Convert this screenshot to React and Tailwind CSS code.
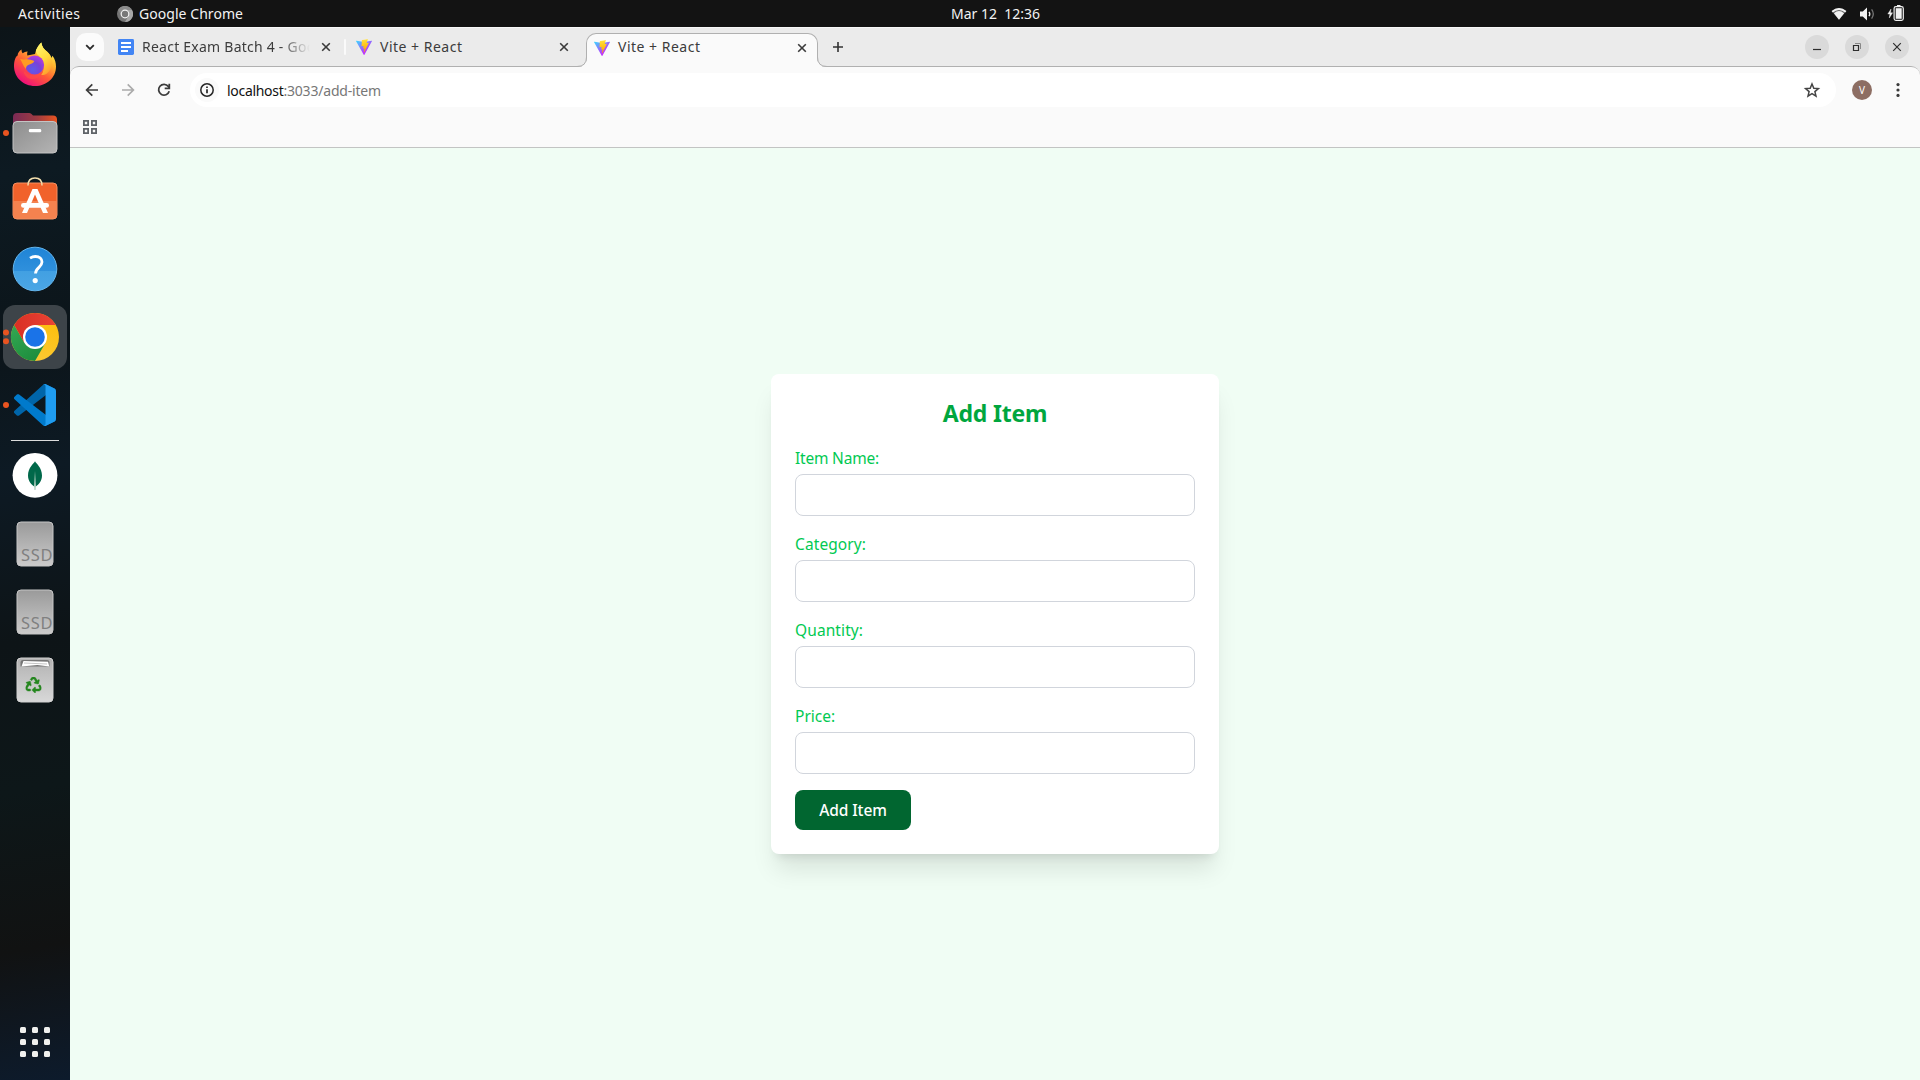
/* ---------- Small icons ---------- */

import { FaRecycle } from "react-icons/fa";

function ViteLogo({ id }) {
  return (
    <svg viewBox="0 0 256 257" className="size-4 shrink-0">
      <defs>
        <linearGradient id={id + "a"} x1="-.828%" x2="57.636%" y1="7.652%" y2="78.411%">
          <stop offset="0%" stopColor="#41D1FF" />
          <stop offset="100%" stopColor="#BD34FE" />
        </linearGradient>
        <linearGradient id={id + "b"} x1="43.376%" x2="50.316%" y1="2.242%" y2="89.03%">
          <stop offset="0%" stopColor="#FFEA83" />
          <stop offset="8.333%" stopColor="#FFDD35" />
          <stop offset="100%" stopColor="#FFA800" />
        </linearGradient>
      </defs>
      <path fill={`url(#${id}a)`} d="M255.153 37.938L134.897 252.976c-2.483 4.44-8.862 4.466-11.382.048L.875 37.958c-2.746-4.814 1.371-10.646 6.827-9.67l120.385 21.517a6.537 6.537 0 0 0 2.322-.004l117.867-21.483c5.438-.991 9.574 4.796 6.877 9.62Z" />
      <path fill={`url(#${id}b)`} d="M185.432.063L96.44 17.501a3.268 3.268 0 0 0-2.634 3.014l-5.474 92.456a3.268 3.268 0 0 0 3.997 3.378l24.777-5.718c2.318-.535 4.413 1.507 3.936 3.838l-7.361 36.047c-.495 2.426 1.782 4.5 4.151 3.78l15.304-4.649c2.372-.72 4.652 1.36 4.15 3.788l-11.698 56.621c-.732 3.542 3.979 5.473 5.943 2.437l1.313-2.028l72.516-144.72c1.215-2.423-.88-5.186-3.54-4.672l-25.505 4.922c-2.396.462-4.435-1.77-3.759-4.114l16.646-57.705c.677-2.35-1.37-4.583-3.769-4.113Z" />
    </svg>
  );
}

function DocsLogo() {
  return (
    <svg viewBox="0 0 16 16" className="size-4 shrink-0">
      <rect width="16" height="16" rx="1.4" fill="#4285f4" />
      <path d="M3 4h10M3 8h10M3 12h7" stroke="#fff" strokeWidth="1.8" />
    </svg>
  );
}

function CloseIcon() {
  return (
    <svg viewBox="0 0 16 16" className="size-4 shrink-0" fill="none" stroke="#3a3a3a" strokeWidth="1.6">
      <path d="M4.2 4.2l7.6 7.6M11.8 4.2l-7.6 7.6" />
    </svg>
  );
}

/* ---------- Top bar ---------- */

function TopBar() {
  return (
    <header className="grid h-[27px] shrink-0 grid-cols-3 items-center bg-[#131313] text-[14px] leading-[27px] text-[#f2f2f2]">
      <div className="flex items-center pl-[18px]">
        <span className="w-[99px] tracking-[0.4px]">Activities</span>
        <svg viewBox="0 0 16 16" className="mr-[6px] size-4">
          <circle cx="8" cy="8" r="8" fill="#757575" />
          <path d="M8 4h7A8 8 0 0 1 8 16l3.5-6z" fill="#a6a6a6" />
          <path d="M1 4a8 8 0 0 1 14 0H8L4.5 10z" fill="#8a8a8a" />
          <circle cx="8" cy="8" r="4.4" fill="#f2f2f2" />
          <circle cx="8" cy="8" r="3.2" fill="#777" />
        </svg>
        <span className="tracking-[0.05px]">Google Chrome</span>
      </div>
      <div className="whitespace-pre pl-[71px] text-center">Mar 12{"  "}12:36</div>
      <div className="flex items-center justify-end gap-3 pr-4">
        <svg viewBox="0 0 16 14" className="h-[14px] w-4">
          <path d="M.6 4.1Q8 -2.3 15.4 4.1L8 12.8z" fill="#666" />
          <path d="M.6 4.1Q8 -2.3 15.4 4.1L14.2 5.5Q8 .5 1.8 5.5z" fill="#f2f2f2" />
          <path d="M2.9 6.2Q8 2 13.1 6.2L8 12.8z" fill="#f2f2f2" />
        </svg>
        <svg viewBox="0 0 16 14" className="h-[14px] w-4">
          <path d="M1 4.4h2.8L8 .5v13L3.8 9.6H1z" fill="#f2f2f2" />
          <path d="M10 4.8q1.6 2.2 0 4.4" stroke="#f2f2f2" strokeWidth="1.3" fill="none" />
          <path d="M12.6 2.4q3.4 4.6 0 9.2" stroke="#777" strokeWidth="1.3" fill="none" />
        </svg>
        <svg viewBox="0 0 17 16" className="-mt-px h-4 w-[17px]">
          <path d="M4 4L.8 9h2.1l-.6 4L5.600 7.800H3.500z" fill="#f2f2f2" stroke="#f2f2f2" strokeWidth=".4" />
          <rect x="10" y="0" width="3.500" height="2" fill="#f2f2f2" />
          <rect x="7.100" y="1.600" width="9.200" height="13.800" rx="1.800" fill="none" stroke="#f2f2f2" strokeWidth="1.200" />
          <rect x="8.700" y="3.200" width="6" height="10.600" fill="#f2f2f2" />
        </svg>
      </div>
    </header>
  );
}

/* ---------- Dock icons, each drawn in a 70x68 slot ---------- */

function Firefox() {
  return (
    <>
      <defs>
        <linearGradient id="ffBody" x1=".8" y1=".1" x2=".25" y2=".95">
          <stop offset="0" stopColor="#fff44f" />
          <stop offset=".3" stopColor="#ffb02e" />
          <stop offset=".6" stopColor="#ff5a36" />
          <stop offset="1" stopColor="#f0107a" />
        </linearGradient>
        <radialGradient id="ffGlobe" cx=".4" cy=".75" r=".75">
          <stop offset="0" stopColor="#5b5bea" />
          <stop offset=".55" stopColor="#7a42d8" />
          <stop offset="1" stopColor="#b43be0" />
        </radialGradient>
        <linearGradient id="ffFlame" x1=".3" y1="0" x2=".7" y2="1">
          <stop offset="0" stopColor="#fff36b" />
          <stop offset=".5" stopColor="#ffdc3e" />
          <stop offset="1" stopColor="#ff9a2c" />
        </linearGradient>
      </defs>
      <path d="M14 35C14 29 16 25 17.6 24.4C17.8 21.5 19.4 19.8 21.6 18.4C21.4 20 22 21.4 22.6 22.2Q25.2 20.3 27.6 20.5Q26.8 22.3 27.3 24.4L35 23C36 17.5 39 14 41.3 11.5C42 16 44 18.5 47.5 21C49.5 23 51 25.3 51.3 27L52.5 24.7C55 28 56 32 56 35.5C56 47 46.6 55 35 55C23.4 55 14 46.5 14 35Z" fill="url(#ffBody)" />
      <path d="M41.3 11.5C42 16 44 18.5 47.5 21C52 25 53.5 32 50.5 38C48 43 44.5 44.5 41 44C46 38 44.5 29 39.5 25.5C36.5 23.5 35.5 20.5 36 19Q38 14.5 41.3 11.5Z" fill="url(#ffFlame)" />
      <circle cx="34.700" cy="34" r="9.400" fill="url(#ffGlobe)" />
      <path d="M20 27.8C22 28.6 23.5 28.6 26 28.3C29 28 31 29 34.3 30C33.8 32 31.5 33 28.8 33.7C26.5 34.5 26 36 26 38C23.3 35.5 22 31 20 27.8Z" fill="#ff9b22" />
      <path d="M25 41C31 46.5 40 44.5 43.2 39C42 46 35 49.5 29.5 47.8C26 46.5 24 43.5 23.5 40Z" fill="#ff4b45" opacity=".75" />
    </>
  );
}

function Files() {
  return (
    <>
      <defs>
        <linearGradient id="flBack" x1="0" x2="1">
          <stop offset="0" stopColor="#7a2a55" />
          <stop offset=".55" stopColor="#a03c42" />
          <stop offset="1" stopColor="#e95420" />
        </linearGradient>
        <linearGradient id="flFront" x1="0" y1="0" x2="1" y2="1">
          <stop offset="0" stopColor="#8d8d8d" />
          <stop offset="1" stopColor="#b4b4b4" />
        </linearGradient>
      </defs>
      <path d="M13 31V18q0-4 4-4h12q1.500 0 2.500 1l1.500 1.500h20q4 0 4 4V31z" fill="url(#flBack)" />
      <rect x="13" y="22.500" width="44" height="31.500" rx="4" fill="url(#flFront)" stroke="#c4c4c4" />
      <rect x="28.800" y="30" width="12.500" height="3.300" rx="1.400" fill="#fff" />
    </>
  );
}

function Software() {
  return (
    <>
      <rect x="13" y="16" width="44" height="36" rx="4" fill="#f1622b" />
      <path d="M13.500 34h43v14.500q0 3.500-3.500 3.500H17q-3.500 0-3.500-3.500z" fill="#f4824f" />
      <rect x="13" y="16" width="44" height="36" rx="4" fill="none" stroke="#f58f60" />
      <path d="M28 18.500c0-4.500 2.500-7.500 7-7.500s7 3 7 7.500" fill="none" stroke="#f4dfae" strokeWidth="1.500" />
      <path d="M32.500 22h5L48 46h-5L35 27.500 27 46h-5z" fill="#fff" />
      <rect x="21" y="36" width="28" height="4.800" rx="2.400" fill="#fff" />
    </>
  );
}

function Help() {
  return (
    <>
      <defs>
        <linearGradient id="hpTop" x1="0" y1="0" x2="0" y2="1">
          <stop offset="0" stopColor="#1f84d6" />
          <stop offset=".54" stopColor="#2f90dc" />
          <stop offset=".55" stopColor="#42a0e2" />
          <stop offset="1" stopColor="#4ba6e5" />
        </linearGradient>
      </defs>
      <circle cx="35" cy="34" r="21.800" fill="url(#hpTop)" stroke="#64b5ec" />
      <path d="M30 23.200q2.600-1.700 5.400-1.700c4.200 0 6.600 2.300 6.600 5.600 0 5.200-6.500 5.400-6.500 11.500" fill="none" stroke="#fff" strokeWidth="2.800" />
      <circle cx="35.200" cy="45.600" r="2.600" fill="#fff" />
    </>
  );
}

function Chrome() {
  return (
    <>
      <defs>
        <linearGradient id="crRed" x1="0" x2="1">
          <stop offset="0" stopColor="#d93025" />
          <stop offset="1" stopColor="#ea4335" />
        </linearGradient>
        <linearGradient id="crGreen" x1="0" y1="0" x2=".6" y2="1">
          <stop offset="0" stopColor="#34a853" />
          <stop offset="1" stopColor="#1e8e3e" />
        </linearGradient>
        <linearGradient id="crYellow" x1="1" y1="0" x2=".5" y2="1">
          <stop offset="0" stopColor="#fbbc04" />
          <stop offset="1" stopColor="#fcc934" />
        </linearGradient>
      </defs>
      <rect x="3" y="2" width="64" height="64" rx="12" fill="#3d4449" />
      <g transform="translate(35 34)">
        <circle r="24" fill="url(#crYellow)" />
        <path d="M-20.800-12A24 24 0 0 0 0 24L10.400 6 0 0-10.400 6z" fill="url(#crGreen)" />
        <path d="M-20.800-12A24 24 0 0 1 20.800-12H0V0L-10.400 6z" fill="url(#crRed)" />
        <circle r="12" fill="#fff" />
        <circle r="9.800" fill="#1a73e8" />
      </g>
    </>
  );
}

function VSCode() {
  return (
    <g transform="translate(14 13) scale(.42)">
      <path fill="#0065A9" d="M96.4614 10.7962L75.8569 0.875542C73.4719 -0.272773 70.6217 0.211611 68.75 2.08333L1.29858 63.5832C-0.515693 65.2373 -0.513607 68.0937 1.30308 69.7452L6.81272 74.7541C8.29793 76.1042 10.5347 76.2036 12.1338 74.9905L93.3609 13.3699C96.086 11.3026 100 13.2462 100 16.6667V16.4275C100 14.0265 98.6246 11.8378 96.4614 10.7962Z" />
      <path fill="#007ACC" d="M96.4614 89.2038L75.8569 99.1245C73.4719 100.273 70.6217 99.7884 68.75 97.9167L1.29858 36.4169C-0.515693 34.7627 -0.513607 31.9063 1.30308 30.2548L6.81272 25.2459C8.29793 23.8958 10.5347 23.7964 12.1338 25.0095L93.3609 86.6301C96.086 88.6974 100 86.7538 100 83.3334V83.5726C100 85.9735 98.6246 88.1622 96.4614 89.2038Z" />
      <path fill="#1F9CF0" d="M75.8578 99.1263C73.4721 100.274 70.6219 99.7885 68.75 97.9166C71.0564 100.223 75 98.5895 75 95.3278V4.67213C75 1.41039 71.0564 -0.223106 68.75 2.08329C70.6219 0.211402 73.4721 -0.273666 75.8578 0.873633L96.4587 10.7807C98.6234 11.8217 100 14.0112 100 16.4132V83.5871C100 85.9891 98.6234 88.1786 96.4586 89.2196L75.8578 99.1263Z" />
    </g>
  );
}

function Mongo() {
  return (
    <>
      <circle cx="35" cy="33.300" r="22.400" fill="#fff" />
      <path d="M35 19.300C36 21.500 42 25.500 42 33.500c0 6-4 9.500-6.200 11h-1.600C32 43 28 39.500 28 33.500c0-8 6-12 7-14.200z" fill="#00684a" />
      <path d="M35 29l.9 15-.3 4h-1.200l-.3-4z" fill="#b4d2c4" />
    </>
  );
}

function Ssd() {
  return (
    <>
      <defs>
        <linearGradient id="ssd" x1="0" y1="0" x2="0" y2="1">
          <stop offset="0" stopColor="#9a9a9a" />
          <stop offset="1" stopColor="#cbcbcb" />
        </linearGradient>
      </defs>
      <rect x="17" y="12" width="36" height="44" rx="4" fill="url(#ssd)" stroke="#c6c6c6" />
      <text x="21" y="50.500" fontSize="16.500" textLength="31.500" fill="#808080" className="font-['Noto_Sans',sans-serif]">SSD</text>
    </>
  );
}

function Trash() {
  return (
    <>
      <defs>
        <linearGradient id="trash" x1="0" y1="0" x2="0" y2="1">
          <stop offset="0" stopColor="#b2b2b2" />
          <stop offset="1" stopColor="#d8d8d8" />
        </linearGradient>
      </defs>
      <rect x="17" y="12" width="36" height="44" rx="4" fill="url(#trash)" stroke="#d2d2d2" />
      <path d="M20.500 20.500v-4q0-2.500 2.500-2.500h24q2.500 0 2.500 2.500v4z" fill="#777" />
      <path d="M21.500 20.500l2-5.500 24.500.8 1.300 4.700-12-1.600z" fill="#fff" />
      <path d="M24 17l23 1" stroke="#aaa" strokeWidth=".7" />
      <FaRecycle x="25.500" y="31" width="19" height="19" color="#25871f" stroke="#25871f" strokeWidth="14" />
    </>
  );
}

function DockItem({ children, label, dots = 0 }) {
  return (
    <svg viewBox="0 0 70 68" className="h-[68px] w-[70px] shrink-0" role="img" aria-label={label}>
      {children}
      {dots === 1 && <circle cx="6" cy="34" r="3" fill="#e95420" />}
      {dots === 2 && (
        <>
          <circle cx="6" cy="29.600" r="3" fill="#e95420" />
          <circle cx="6" cy="38.300" r="3" fill="#e95420" />
        </>
      )}
    </svg>
  );
}

function Dock() {
  return (
    <aside className="flex w-[70px] shrink-0 flex-col items-center bg-[linear-gradient(170deg,#0c1418_0%,#0d1a22_14%,#0c151a_30%,#0d1a24_42%,#0d1417_58%,#0d1719_72%,#111212_87%,#0d1b2c_100%)] pt-1">
      <DockItem label="Firefox"><Firefox /></DockItem>
      <DockItem label="Files" dots={1}><Files /></DockItem>
      <DockItem label="Software"><Software /></DockItem>
      <DockItem label="Help"><Help /></DockItem>
      <DockItem label="Google Chrome" dots={2}><Chrome /></DockItem>
      <DockItem label="Visual Studio Code" dots={1}><VSCode /></DockItem>
      <div className="my-px h-px w-12 shrink-0 bg-[#dcdcdc]" />
      <DockItem label="MongoDB Compass"><Mongo /></DockItem>
      <DockItem label="SSD"><Ssd /></DockItem>
      <DockItem label="SSD"><Ssd /></DockItem>
      <DockItem label="Trash"><Trash /></DockItem>
      <div className="mt-auto mb-[23px] grid grid-cols-3 gap-[6px]">
        {Array.from({ length: 9 }, (_, i) => (
          <span key={i} className="size-[6px] rounded-[1.5px] bg-[#f0f0ee]" />
        ))}
      </div>
    </aside>
  );
}

/* ---------- Browser chrome ---------- */

function TabContent({ icon, title }) {
  return (
    <>
      {icon}
      {title}
      <CloseIcon />
    </>
  );
}

function TabStrip() {
  return (
    <div className="flex h-[39px] shrink-0 border-t border-[#f7f7f7] bg-[#ebebeb] text-[14px] text-[#3c3c3c]">
      <button className="mt-[5px] ml-[6px] flex size-7 items-center justify-center rounded-[10px] bg-[#fbfbfb]" aria-label="Search tabs">
        <svg viewBox="0 0 12 12" className="size-3" fill="none" stroke="#2b2b2b" strokeWidth="1.800"><path d="M2.200 4.200L6 8l3.800-3.800" /></svg>
      </button>
      <div className="ml-[6px] flex h-[38px] w-[238px] items-center gap-2 pl-2">
        <TabContent
          icon={<DocsLogo />}
          title={<span className="w-[168px] pb-[2px] whitespace-nowrap tracking-[0.24px] [mask-image:linear-gradient(to_right,#000_82%,transparent_100%)]">React Exam Batch 4 - Goo</span>}
        />
        <div className="ml-[2px] h-4 w-[2px] rounded bg-[#fafafa]" />
      </div>
      <div className="flex h-[38px] w-[238px] items-center gap-2 pl-2">
        <TabContent icon={<ViteLogo id="v1" />} title={<span className="w-[168px] pb-[2px] tracking-[0.5px]">Vite + React</span>} />
      </div>
      <div className="relative mt-[5px] h-[34px] w-[232px] rounded-t-[10px] border border-b-0 border-[#b0b0b0] bg-[#fafafa]">
        <div className="flex h-[27px] items-center gap-2 pl-[7px]">
          <TabContent icon={<ViteLogo id="v2" />} title={<span className="w-[168px] pb-[2px] tracking-[0.5px]">Vite + React</span>} />
        </div>
        <svg viewBox="0 0 10 10" className="absolute -left-[10px] bottom-0 size-[10px]">
          <path d="M10 0q0 10-10 10h10z" fill="#fafafa" />
          <path d="M9.500 0q0 9.500-9.500 9.500" fill="none" stroke="#b0b0b0" />
        </svg>
        <svg viewBox="0 0 10 10" className="absolute -right-[10px] bottom-0 size-[10px]">
          <path d="M0 0q0 10 10 10H0z" fill="#fafafa" />
          <path d="M.5 0q0 9.500 9.500 9.500" fill="none" stroke="#b0b0b0" />
        </svg>
      </div>
      <svg viewBox="0 0 12 12" className="mt-[13px] ml-[14px] size-3" stroke="#333" strokeWidth="1.600"><path d="M6 1v10M1 6h10" /></svg>
      <div className="mt-[7px] mr-[11px] ml-auto flex gap-4">
        {["M2 8.500h8", "M2.500 4.500h5v5h-5z", "M2.200 2.200l7.600 7.600M9.800 2.200L2.200 9.800"].map((d, i) => (
          <span key={i} className="flex size-6 items-center justify-center rounded-full bg-[#dadada]">
            <svg viewBox="0 0 12 12" className="size-3" fill="none" stroke="#2e2e2e" strokeWidth="1.200">
              <path d={d} />
              {i === 1 && <path d="M4 2.500h5.500V8" stroke="#888" strokeWidth="1" />}
            </svg>
          </span>
        ))}
      </div>
    </div>
  );
}

function Toolbar() {
  return (
    <div className="bg-[#ebebeb]">
      <div className="flex h-[82px] flex-col rounded-t-[9px] border-t border-b border-t-[#b0b0b0] border-b-[#c2c4c3] bg-[#fafafa]">
        <div className="flex h-[46px] items-center">
          <svg viewBox="0 0 20 20" className="ml-3 size-5" fill="none" stroke="#3c3c3c" strokeWidth="1.700"><path d="M16 10H4.800M10.300 4.300L4.600 10l5.700 5.700" /></svg>
          <svg viewBox="0 0 20 20" className="ml-4 size-5" fill="none" stroke="#ababab" strokeWidth="1.700"><path d="M4 10h11.200M9.700 4.300l5.700 5.700-5.700 5.700" /></svg>
          <svg viewBox="0 0 20 20" className="ml-4 size-5" fill="none" stroke="#3c3c3c" strokeWidth="1.800"><path d="M15.200 11.300A5.400 5.400 0 1 1 14.300 6.400L15.400 7.700" /><path d="M15.300 3.700v4.600h-4.600" /></svg>
          <div className="ml-4 flex h-[34px] w-[1646px] items-center rounded-full bg-white pl-[5px] text-[14px]">
            <span className="flex size-6 items-center justify-center rounded-full bg-[#fafafa]">
              <svg viewBox="0 0 16 16" className="size-4" fill="none" stroke="#262626"><circle cx="8" cy="8" r="6.200" strokeWidth="1.500" /><path d="M8 7.200v4M8 4.400v1.700" strokeWidth="1.700" /></svg>
            </span>
            <span className="ml-2 tracking-[-0.2px] text-[#777]"><span className="tracking-[-0.3px] text-[#111]">localhost</span>:3033/add-item</span>
            <svg viewBox="0 0 18 18" className="mr-[15px] ml-auto size-[18px]" fill="none" stroke="#444" strokeWidth="1.500"><path d="M9 3l1.800 4.200 4.600.4-3.500 3 1.100 4.500L9 12.700l-4 2.400 1.100-4.500-3.500-3 4.600-.4z" /></svg>
          </div>
          <span className="ml-4 flex size-5 items-center justify-center rounded-full bg-[#8d6e63] text-[10px] leading-none text-white">V</span>
          <svg viewBox="0 0 16 16" className="ml-[18px] size-4" fill="#3a3a3a"><circle cx="8" cy="2.600" r="1.600" /><circle cx="8" cy="8" r="1.600" /><circle cx="8" cy="13.400" r="1.600" /></svg>
        </div>
        <svg viewBox="0 0 14 14" className="mt-[7px] ml-[13px] size-[14px]" fill="none" stroke="#5f6368" strokeWidth="1.800">
          <path d="M.9.900h4.200v4.200H.9zM8.900.900h4.200v4.200H8.900zM.9 8.900h4.200v4.200H.9zM8.900 8.900h4.200v4.200H8.900z" />
        </svg>
      </div>
    </div>
  );
}

/* ---------- Page ---------- */

function Field({ label, className = "" }) {
  return (
    <div className="mb-4">
      <label className={"mb-1 block text-[15.5px] leading-6 text-green-500 " + className}>{label}</label>
      <input className="block h-[42px] w-full rounded-lg border border-gray-300 px-4 outline-none" />
    </div>
  );
}

function AddItemPage() {
  return (
    <main className="flex flex-1 items-center justify-center bg-green-50">
      <form className="w-full max-w-md rounded-lg bg-white p-6 shadow-xl" onSubmit={(e) => e.preventDefault()}>
        <h2 className="mb-[18px] text-center text-[23px] leading-[30px] font-bold tracking-[-0.2px] text-green-600">Add Item</h2>
        <Field label="Item Name:" className="tracking-[-0.2px]" />
        <Field label="Category:" className="tracking-[0.1px]" />
        <Field label="Quantity:" className="tracking-[0.1px]" />
        <Field label="Price:" />
        <button className="block h-10 w-29 rounded-lg bg-green-800 pt-px text-[15.5px] font-medium tracking-[-0.1px] text-white">Add Item</button>
      </form>
    </main>
  );
}

export default function App() {
  return (
    <div className="flex h-screen w-screen flex-col overflow-hidden font-['Noto_Sans',sans-serif]">
      <TopBar />
      <div className="flex min-h-0 flex-1">
        <Dock />
        <div className="flex min-w-0 flex-1 flex-col">
          <TabStrip />
          <Toolbar />
          <AddItemPage />
        </div>
      </div>
    </div>
  );
}
